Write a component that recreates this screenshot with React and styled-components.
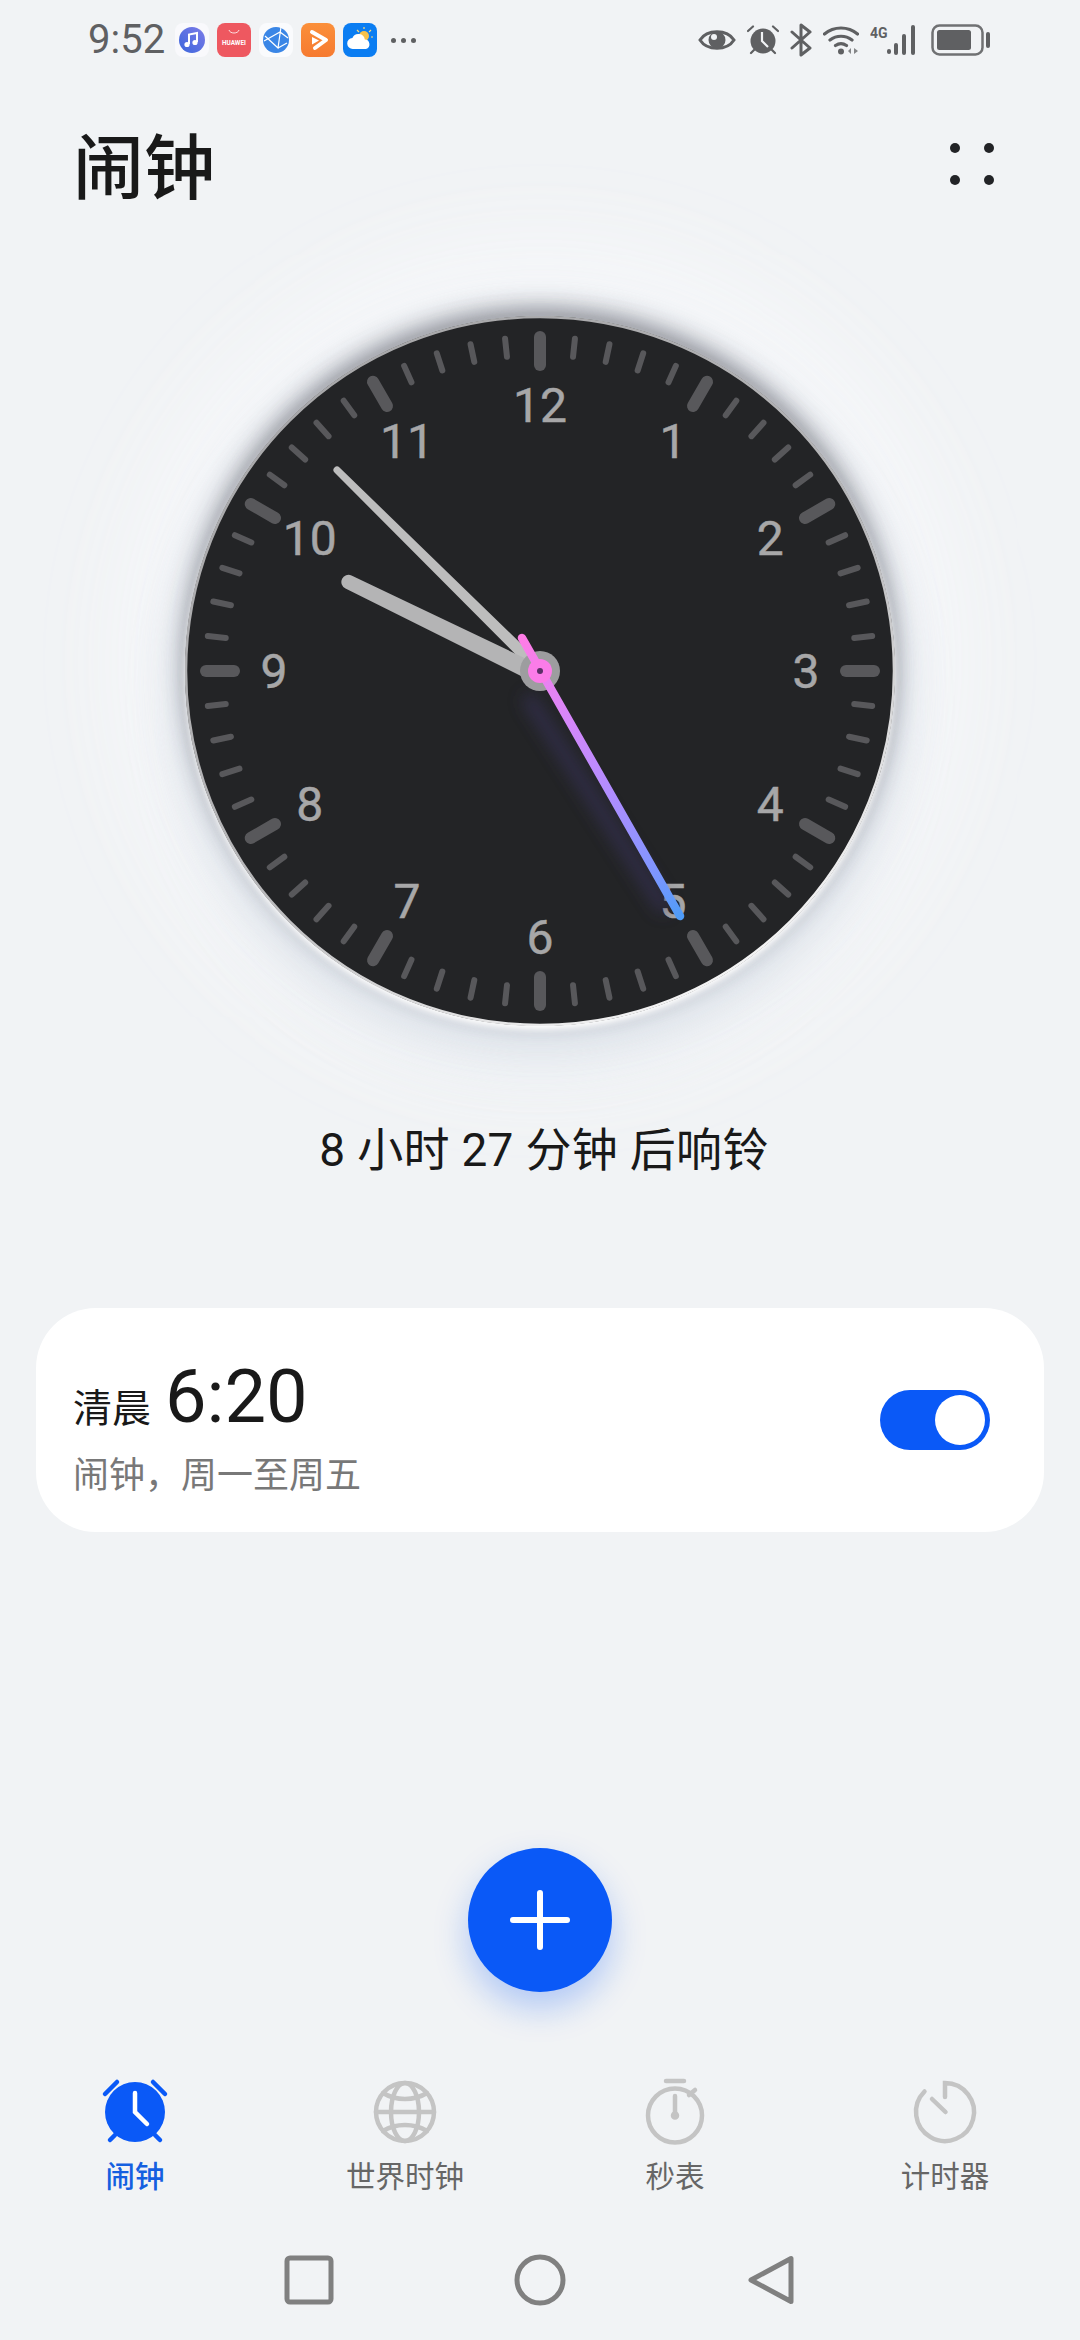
import styled, { createGlobalStyle } from 'styled-components';

const BLUE = '#0a59f7';
const CJK = '"Noto Sans CJK SC", "Noto Sans", sans-serif';
const LATIN = 'Roboto, "Noto Sans CJK SC", sans-serif';

const GlobalStyle = createGlobalStyle`
  html, body {
    margin: 0;
    padding: 0;
    background: #f1f3f5;
  }
`;

const Screen = styled.div`
  width: 1080px;
  height: 2340px;
  display: flex;
  flex-direction: column;
  overflow: hidden;
  background: #f1f3f5;
  font-family: ${LATIN};
`;

const StatusBar = styled.div`
  height: 80px;
  display: flex;
  align-items: center;
  padding: 0 89px 0 88px;
  color: #5f6062;
`;

const StatusTime = styled.span`
  font-size: 40px;
  width: 87px;
  line-height: 80px;
`;

const AppIcons = styled.div`
  display: flex;
  align-items: center;
  gap: 8px;
`;

const MoreApps = styled.div`
  display: flex;
  gap: 5px;
  margin-left: 14px;
`;

const MoreDot = styled.i`
  width: 5px;
  height: 5px;
  border-radius: 50%;
  background: #5f6062;
`;

const SystemIcons = styled.div`
  margin-left: auto;
  display: flex;
  align-items: center;
  gap: 11px;
`;

const Header = styled.header`
  margin-top: 32px;
  height: 100px;
  display: flex;
  align-items: center;
  justify-content: space-between;
  padding: 0 83px 0 73px;
`;

const Title = styled.h1`
  margin: 0;
  font-family: ${CJK};
  font-size: 71px;
  font-weight: 500;
  line-height: 100px;
  color: #191919;
`;

const MoreButton = styled.svg`
  width: 50px;
  height: 50px;
  margin-top: 4px;
  fill: #222326;
`;

const ClockSection = styled.section`
  margin-top: 104px;
  height: 710px;
  display: flex;
  justify-content: center;
`;

const Dial = styled.div`
  width: 710px;
  height: 710px;
  border-radius: 50%;
  background: #232426;
  box-shadow:
    0 4px 6px #fff,
    0 -8px 22px rgba(45, 45, 52, 0.45),
    0 0 42px 6px rgba(178, 186, 204, 0.45),
    0 36px 50px 8px rgba(228, 232, 238, 0.8),
    0 -10px 120px 40px rgba(250, 251, 253, 0.9);
`;

const DialArt = styled.svg`
  display: block;
  width: 710px;
  height: 710px;
`;

const Numeral = styled.text`
  font-family: ${LATIN};
  font-size: 48px;
  fill: #a7a7a8;
  stroke: #a7a7a8;
  stroke-width: 0.5;
  text-anchor: middle;
`;

const Caption = styled.p`
  margin: 94px 0 0;
  padding-left: 8px;
  height: 60px;
  line-height: 60px;
  text-align: center;
  font-family: ${LATIN};
  font-size: 46px;
  letter-spacing: 0.3px;
  color: #191919;
`;

const AlarmCard = styled.article`
  margin: 128px 36px 0;
  height: 224px;
  box-sizing: border-box;
  padding: 0 54px 0 37px;
  display: flex;
  align-items: center;
  justify-content: space-between;
  background: #fff;
  border-radius: 60px;
`;

const AlarmText = styled.div`
  display: flex;
  flex-direction: column;
  padding-top: 12px;
`;

const AlarmTime = styled.div`
  display: flex;
  align-items: baseline;
  gap: 14px;
  color: #191919;
  line-height: 84px;
`;

const Period = styled.span`
  font-family: ${CJK};
  font-size: 39px;
`;

const Clock = styled.span`
  font-size: 74px;
`;

const AlarmRepeat = styled.div`
  font-family: ${CJK};
  font-size: 36px;
  line-height: 50px;
  color: #787878;
`;

const Toggle = styled.div`
  width: 110px;
  height: 60px;
  box-sizing: border-box;
  padding: 5px;
  display: flex;
  justify-content: ${(p) => (p.$on ? 'flex-end' : 'flex-start')};
  border-radius: 30px;
  background: ${BLUE};
`;

const Knob = styled.span`
  width: 50px;
  height: 50px;
  border-radius: 50%;
  background: #fff;
`;

const AddButton = styled.button`
  margin: 316px auto 0;
  width: 144px;
  height: 144px;
  padding: 0;
  flex: none;
  display: flex;
  align-items: center;
  justify-content: center;
  border: 0;
  border-radius: 50%;
  background: ${BLUE};
  box-shadow: 0 16px 34px rgba(10, 89, 247, 0.28);
`;

const Tabs = styled.nav`
  margin-top: 84px;
  display: grid;
  grid-template-columns: repeat(4, 270px);
`;

const Tab = styled.div`
  display: flex;
  flex-direction: column;
  align-items: center;
  gap: 6px;
`;

const TabLabel = styled.span`
  font-family: ${CJK};
  font-size: 29.5px;
  font-weight: ${(p) => (p.$active ? 500 : 400)};
  line-height: 40px;
  color: ${(p) => (p.$active ? '#145fe0' : '#666')};
`;

const TabIcon = styled.svg`
  display: block;
  width: 72px;
  height: 72px;
  fill: none;
  stroke: ${(p) => (p.$active ? BLUE : '#c4c4c4')};
  stroke-width: 4.5;
  stroke-linecap: round;
`;

const NavBar = styled.div`
  margin: 56px auto 0;
  height: 60px;
  display: grid;
  grid-template-columns: repeat(3, 231px);
  justify-items: center;
  align-items: center;
`;

const NavIcon = styled.svg`
  width: 60px;
  height: 60px;
  fill: none;
  stroke: #808080;
  stroke-width: 5;
  stroke-linejoin: round;
`;

const Pict = styled.svg`
  display: block;
  flex: none;
`;

const MusicIcon = () => (
  <Pict width="34" height="34" viewBox="0 0 34 34">
    <defs>
      <linearGradient id="mus" x1="0" y1="1" x2="1" y2="0">
        <stop offset="0" stopColor="#3b66dc" />
        <stop offset="1" stopColor="#7d7be8" />
      </linearGradient>
    </defs>
    <rect width="34" height="34" rx="8" fill="#f9f9fc" />
    <circle cx="17" cy="17" r="13" fill="url(#mus)" />
    <path d="M14 21V11.5l8-1.6V19" fill="none" stroke="#fff" strokeWidth="2" />
    <circle cx="12" cy="21.5" r="2.6" fill="#fff" />
    <circle cx="20" cy="19.5" r="2.6" fill="#fff" />
  </Pict>
);

const HuaweiIcon = () => (
  <Pict width="34" height="34" viewBox="0 0 34 34">
    <rect width="34" height="34" rx="8" fill="#ee5860" />
    <path d="M12 7c1 4 9 4 10 0" fill="none" stroke="#fff" strokeWidth="1" opacity="0.8" />
    <text x="17" y="22" fontFamily="Roboto, sans-serif" fontSize="6.4" fontWeight="700" fill="#fff" textAnchor="middle">HUAWEI</text>
  </Pict>
);

const BrowserIcon = () => (
  <Pict width="34" height="34" viewBox="0 0 34 34">
    <rect width="34" height="34" rx="8" fill="#fafbfd" />
    <circle cx="17" cy="17" r="13" fill="#3a86e6" />
    <path d="M6 13l13 12 3-21M5 18l16-9 8 6M19 25l9-5" fill="none" stroke="#fff" strokeWidth="1.2" />
  </Pict>
);

const VideoIcon = () => (
  <Pict width="34" height="34" viewBox="0 0 34 34">
    <defs>
      <linearGradient id="vid" x1="0" y1="0" x2="0" y2="1">
        <stop offset="0" stopColor="#fb8f3a" />
        <stop offset="1" stopColor="#f67a30" />
      </linearGradient>
    </defs>
    <rect width="34" height="34" rx="8" fill="url(#vid)" />
    <path d="M11 9l14 8-11 8" fill="none" stroke="#fff" strokeWidth="4" strokeLinecap="round" strokeLinejoin="round" />
    <path d="M11 14l7 3.500-7 4z" fill="#fff" />
  </Pict>
);

const WeatherIcon = () => (
  <Pict width="34" height="34" viewBox="0 0 34 34">
    <rect width="34" height="34" rx="8" fill="#0b7df2" />
    <circle cx="21" cy="13" r="5" fill="#f6c14b" />
    <path d="M21 4v2M28 7l-2 2M30 14h-2M14 7l2 2" stroke="#ffd97a" strokeWidth="1.2" />
    <path d="M10 26a5.5 5.5 0 0 1-.6-11 6.5 6.5 0 0 1 12.4 1.6A4.8 4.8 0 0 1 23 26z" fill="#fff" />
  </Pict>
);

const EyeIcon = () => (
  <Pict width="38" height="26" viewBox="0 0 38 26">
    <path d="M2 13C9 2 29 2 36 13 29 24 9 24 2 13z" fill="none" stroke="#5f6062" strokeWidth="3" />
    <circle cx="19" cy="13" r="8.5" fill="#5f6062" />
    <circle cx="16" cy="10" r="3" fill="#f1f3f5" />
  </Pict>
);

const SmallAlarmIcon = () => (
  <Pict width="32" height="30" viewBox="0 0 32 30">
    <circle cx="16" cy="16" r="12.5" fill="#5f6062" />
    <path d="M1 6l5-4.5M31 6l-5-4.5M4 28l3-3M28 28l-3-3" stroke="#5f6062" strokeWidth="2.2" strokeLinecap="round" />
    <path d="M15 7v9l6 6" fill="none" stroke="#f1f3f5" strokeWidth="2.2" />
  </Pict>
);

const BluetoothIcon = () => (
  <Pict width="22" height="34" viewBox="0 0 22 34">
    <path d="M2 9l18 16-9 7V2l9 7L2 25" fill="none" stroke="#5f6062" strokeWidth="3" strokeLinejoin="round" strokeLinecap="round" />
  </Pict>
);

const WifiIcon = () => (
  <Pict width="36" height="30" viewBox="0 0 36 30">
    <path d="M1.5 9c9.500-8 23.500-8 33 0M7 15c6.500-5 15.500-5 22 0M12.500 20.500c3.500-2.500 7.500-2.500 11 0" fill="none" stroke="#5f6062" strokeWidth="3.200" strokeLinecap="round" />
    <circle cx="18" cy="26.500" r="3" fill="#5f6062" />
    <path d="M25 26l3-3v6zM31 23l4 3-4 3z" fill="#5f6062" opacity="0.75" />
  </Pict>
);

const NetworkIcon = () => (
  <Pict width="50" height="30" viewBox="0 0 50 30">
    <text x="0" y="13" fontFamily="Roboto, sans-serif" fontSize="14" fontWeight="700" fill="#5f6062">4G</text>
    <rect x="17" y="24" width="4" height="5" rx="2" fill="#5f6062" />
    <rect x="24" y="18" width="4" height="12" rx="2" fill="#5f6062" />
    <rect x="32" y="9" width="4" height="21" rx="2" fill="#5f6062" />
    <rect x="41" y="0" width="4" height="30" rx="2" fill="#5f6062" />
  </Pict>
);

const BatteryIcon = () => (
  <Pict width="60" height="32" viewBox="0 0 60 32">
    <rect x="1.500" y="1.500" width="50" height="29" rx="7" fill="none" stroke="#707173" strokeWidth="2.500" />
    <rect x="6" y="6" width="34" height="20" rx="2.500" fill="#5f6062" />
    <rect x="55" y="8" width="4" height="16" rx="2" fill="#5f6062" />
  </Pict>
);

const ClockFace = () => (
  <DialArt viewBox="0 0 710 710">
    <defs>
      <linearGradient id="rim" x1="0.2" y1="0" x2="0.8" y2="1">
        <stop offset="0" stopColor="#a6a6a8" />
        <stop offset="0.55" stopColor="#b8b8ba" />
        <stop offset="1" stopColor="#ffffff" />
      </linearGradient>
      <linearGradient id="second" gradientUnits="userSpaceOnUse" x1="337" y1="322" x2="495" y2="600">
        <stop offset="0" stopColor="#ff7ce6" />
        <stop offset="0.3" stopColor="#d587fa" />
        <stop offset="0.6" stopColor="#aa8eff" />
        <stop offset="0.85" stopColor="#7d96ff" />
        <stop offset="1" stopColor="#4f9cf8" />
      </linearGradient>
      <filter id="soft" x="-30%" y="-30%" width="160%" height="160%">
        <feGaussianBlur stdDeviation="8" />
      </filter>
    </defs>
    <circle cx="355" cy="355" r="354" fill="none" stroke="url(#rim)" strokeWidth="2.500" />
    {Array.from({ length: 60 }, (_, i) => {
      const major = i % 5 === 0;
      return (
        <line
          key={i}
          x1="355"
          x2="355"
          y1="21"
          y2={major ? 49 : 39}
          stroke="#58585b"
          strokeWidth={major ? 12 : 6}
          strokeLinecap="round"
          transform={`rotate(${i * 6} 355 355)`}
        />
      );
    })}
    {Array.from({ length: 12 }, (_, i) => {
      const a = ((i + 1) * Math.PI) / 6;
      return (
        <Numeral key={i} x={355 + 266 * Math.sin(a)} y={355 - 266 * Math.cos(a) + 17}>
          {i + 1}
        </Numeral>
      );
    })}
    <line x1="345" y1="385" x2="478" y2="590" stroke="#3a3560" strokeWidth="14" strokeLinecap="round" filter="url(#soft)" opacity="0.6" />
    <path d="M154.500 151.500L359 350 351 359 149.500 156.500a3.500 3.500 0 0 1 5-5z" fill="#bdbdbd" />
    <path d="M350 347L166.500 259.500a7 7 0 0 0-6 13L346 365z" fill="#b4b4b5" />
    <circle cx="355" cy="355" r="20" fill="#9d9d9f" />
    <line x1="337" y1="322" x2="495" y2="600" stroke="url(#second)" strokeWidth="8.500" strokeLinecap="round" />
    <circle cx="355" cy="355" r="12" fill="#fb7ce8" />
    <circle cx="355" cy="355" r="3" fill="#5b2f66" />
  </DialArt>
);

const PlusIcon = () => (
  <Pict width="60" height="60" viewBox="0 0 60 60">
    <path d="M3 30h54M30 3v54" stroke="#fff" strokeWidth="6" strokeLinecap="round" />
  </Pict>
);

const App = () => (
  <Screen>
    <GlobalStyle />
    <StatusBar>
      <StatusTime>9:52</StatusTime>
      <AppIcons>
        <MusicIcon />
        <HuaweiIcon />
        <BrowserIcon />
        <VideoIcon />
        <WeatherIcon />
      </AppIcons>
      <MoreApps>
        <MoreDot />
        <MoreDot />
        <MoreDot />
      </MoreApps>
      <SystemIcons>
        <EyeIcon />
        <SmallAlarmIcon />
        <BluetoothIcon />
        <WifiIcon />
        <NetworkIcon />
        <BatteryIcon />
      </SystemIcons>
    </StatusBar>

    <Header>
      <Title>闹钟</Title>
      <MoreButton viewBox="0 0 50 50">
        <circle cx="8" cy="9" r="5" />
        <circle cx="42" cy="9" r="5" />
        <circle cx="8" cy="41" r="5" />
        <circle cx="42" cy="41" r="5" />
      </MoreButton>
    </Header>

    <ClockSection>
      <Dial>
        <ClockFace />
      </Dial>
    </ClockSection>

    <Caption>8 小时 27 分钟 后响铃</Caption>

    <AlarmCard>
      <AlarmText>
        <AlarmTime>
          <Period>清晨</Period>
          <Clock>6:20</Clock>
        </AlarmTime>
        <AlarmRepeat>闹钟，周一至周五</AlarmRepeat>
      </AlarmText>
      <Toggle $on>
        <Knob />
      </Toggle>
    </AlarmCard>

    <AddButton aria-label="添加闹钟">
      <PlusIcon />
    </AddButton>

    <Tabs>
      <Tab>
        <TabIcon $active viewBox="0 0 72 72">
          <circle cx="36" cy="36" r="30" fill={BLUE} stroke="none" />
          <path d="M6 18L18 6M54 6l12 12M11 64l5-5M56 59l5 5" />
          <path d="M36 17v19l12 12" stroke="#fff" />
        </TabIcon>
        <TabLabel $active>闹钟</TabLabel>
      </Tab>
      <Tab>
        <TabIcon viewBox="0 0 72 72">
          <circle cx="36" cy="36" r="29" />
          <ellipse cx="36" cy="36" rx="14" ry="29" />
          <path d="M7 36h58M14 17c13 8 31 8 44 0M14 55c13-8 31-8 44 0" />
        </TabIcon>
        <TabLabel>世界时钟</TabLabel>
      </Tab>
      <Tab>
        <TabIcon viewBox="0 0 72 72">
          <circle cx="36" cy="39.500" r="27" />
          <path d="M27 5h18M50 19l6-5M36 20v19" />
          <circle cx="36" cy="39.500" r="2" fill="#c4c4c4" />
        </TabIcon>
        <TabLabel>秒表</TabLabel>
      </Tab>
      <Tab>
        <TabIcon viewBox="0 0 72 72">
          <path d="M36 21V7a29 29 0 1 1-20.500 8.500M23 23l13.500 13" />
        </TabIcon>
        <TabLabel>计时器</TabLabel>
      </Tab>
    </Tabs>

    <NavBar>
      <NavIcon viewBox="0 0 60 60">
        <rect x="8" y="8" width="44" height="44" rx="3" />
      </NavIcon>
      <NavIcon viewBox="0 0 60 60">
        <circle cx="30" cy="30" r="23" />
      </NavIcon>
      <NavIcon viewBox="0 0 60 60">
        <path d="M10 30L50 8.500v43z" />
      </NavIcon>
    </NavBar>
  </Screen>
);

export default App;
